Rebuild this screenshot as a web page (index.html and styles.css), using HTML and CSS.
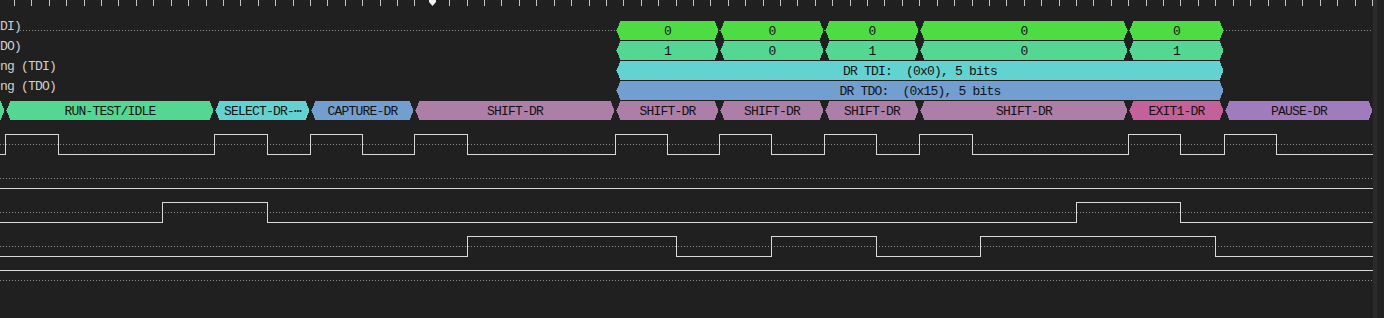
FILE: index.html
```html
<!DOCTYPE html>
<html lang="en">
<head>
    <meta charset="UTF-8">
    <meta name="viewport" content="width=device-width, initial-scale=1.0">
    <link rel="stylesheet" href="styles.css">
    <title>JTAG trace</title>
</head>
<body>
    <div class="view">
        <svg class="traces" width="1373" height="318" viewBox="0 0 1373 318">
            <!-- ruler -->
            <path class="tick" d="M14.5 0V6M31.5 0V6M49.5 0V6M66.5 0V6M84.5 0V6M101.5 0V6M118.5 0V6M136.5 0V6M153.5 0V6M171.5 0V6M188.5 0V6M206.5 0V6M223.5 0V6M240.5 0V6M258.5 0V6M275.5 0V6M293.5 0V6M310.5 0V6M327.5 0V6M345.5 0V6M362.5 0V6M380.5 0V6M397.5 0V6M414.5 0V6M449.5 0V6M467.5 0V6M484.5 0V6M501.5 0V6M519.5 0V6M536.5 0V6M554.5 0V6M571.5 0V6M589.5 0V6M606.5 0V6M623.5 0V6M641.5 0V6M658.5 0V6M676.5 0V6M693.5 0V6M710.5 0V6M728.5 0V6M745.5 0V6M763.5 0V6M780.5 0V6M797.5 0V6M815.5 0V6M832.5 0V6M850.5 0V6M867.5 0V6M884.5 0V6M902.5 0V6M919.5 0V6M937.5 0V6M954.5 0V6M972.5 0V6M989.5 0V6M1006.5 0V6M1024.5 0V6M1041.5 0V6M1059.5 0V6M1076.5 0V6M1093.5 0V6M1111.5 0V6M1128.5 0V6M1146.5 0V6M1163.5 0V6M1180.5 0V6M1198.5 0V6M1215.5 0V6M1233.5 0V6M1250.5 0V6M1268.5 0V6M1285.5 0V6M1302.5 0V6M1320.5 0V6M1337.5 0V6M1355.5 0V6M1372.5 0V6"/>
            <polygon class="marker" points="429,0 436,0 436,2 432.5,6 429,2"/>

            <!-- grid lines -->
            <line class="grid" x1="20" y1="30.5" x2="1373" y2="30.5"/>
            <line class="grid" x1="0" y1="144.5" x2="1373" y2="144.5"/>
            <line class="grid" x1="0" y1="178.5" x2="1373" y2="178.5"/>
            <line class="grid" x1="0" y1="212.5" x2="1373" y2="212.5"/>
            <line class="grid" x1="0" y1="246.5" x2="1373" y2="246.5"/>
            <line class="grid" x1="0" y1="280.5" x2="1373" y2="280.5"/>

            <!-- trace labels -->
            <text class="label" x="0" y="30">DI)</text>
            <text class="label" x="0" y="50">DO)</text>
            <text class="label" x="0" y="70">ng (TDI)</text>
            <text class="label" x="0" y="90">ng (TDO)</text>

            <!-- TDI bits -->
            <g class="ann c-bit0">
                <polygon points="616.5,30.5 620.5,21 714.5,21 718.5,30.5 714.5,40 620.5,40"/>
                <polygon points="720.5,30.5 724.5,21 819.5,21 823.5,30.5 819.5,40 724.5,40"/>
                <polygon points="825.5,30.5 829.5,21 914.5,21 918.5,30.5 914.5,40 829.5,40"/>
                <polygon points="920.5,30.5 924.5,21 1123.5,21 1127.5,30.5 1123.5,40 924.5,40"/>
                <polygon points="1129.5,30.5 1133.5,21 1219.5,21 1223.5,30.5 1219.5,40 1133.5,40"/>
                <text x="667.5" y="35">0</text>
                <text x="772" y="35">0</text>
                <text x="872" y="35">0</text>
                <text x="1024" y="35">0</text>
                <text x="1176.5" y="35">0</text>
            </g>

            <!-- TDO bits -->
            <g class="ann c-bit1">
                <polygon points="616.5,50.5 620.5,41 714.5,41 718.5,50.5 714.5,60 620.5,60"/>
                <polygon points="720.5,50.5 724.5,41 819.5,41 823.5,50.5 819.5,60 724.5,60"/>
                <polygon points="825.5,50.5 829.5,41 914.5,41 918.5,50.5 914.5,60 829.5,60"/>
                <polygon points="920.5,50.5 924.5,41 1123.5,41 1127.5,50.5 1123.5,60 924.5,60"/>
                <polygon points="1129.5,50.5 1133.5,41 1219.5,41 1223.5,50.5 1219.5,60 1133.5,60"/>
                <text x="667.5" y="55">1</text>
                <text x="772" y="55">0</text>
                <text x="872" y="55">1</text>
                <text x="1024" y="55">0</text>
                <text x="1176.5" y="55">1</text>
            </g>

            <!-- data registers -->
            <g class="ann c-cyan">
                <polygon points="616.5,70.5 620.5,61 1219.5,61 1223.5,70.5 1219.5,80 620.5,80"/>
                <text x="920" y="75" xml:space="preserve">DR TDI:  (0x0), 5 bits</text>
            </g>
            <g class="ann c-blue">
                <polygon points="616.5,90.5 620.5,81 1219.5,81 1223.5,90.5 1219.5,100 620.5,100"/>
                <text x="920" y="95" xml:space="preserve">DR TDO:  (0x15), 5 bits</text>
            </g>

            <!-- TAP states -->
            <g class="ann c-bit1">
                <polygon points="-30,110.5 -26,101 0.5,101 4.5,110.5 0.5,120 -26,120"/>
                <polygon points="6.5,110.5 10.5,101 209.5,101 213.5,110.5 209.5,120 10.5,120"/>
                <text x="110" y="115">RUN-TEST/IDLE</text>
            </g>
            <g class="ann c-cyan">
                <polygon points="215.5,110.5 219.5,101 305.5,101 309.5,110.5 305.5,120 219.5,120"/>
                <text x="262.5" y="115">SELECT-DR-⋯</text>
            </g>
            <g class="ann c-blue">
                <polygon points="311.5,110.5 315.5,101 409.5,101 413.5,110.5 409.5,120 315.5,120"/>
                <text x="362.5" y="115">CAPTURE-DR</text>
            </g>
            <g class="ann c-mauve">
                <polygon points="415.5,110.5 419.5,101 610.5,101 614.5,110.5 610.5,120 419.5,120"/>
                <polygon points="616.5,110.5 620.5,101 714.5,101 718.5,110.5 714.5,120 620.5,120"/>
                <polygon points="720.5,110.5 724.5,101 819.5,101 823.5,110.5 819.5,120 724.5,120"/>
                <polygon points="825.5,110.5 829.5,101 914.5,101 918.5,110.5 914.5,120 829.5,120"/>
                <polygon points="920.5,110.5 924.5,101 1123.5,101 1127.5,110.5 1123.5,120 924.5,120"/>
                <text x="515" y="115">SHIFT-DR</text>
                <text x="667.5" y="115">SHIFT-DR</text>
                <text x="772" y="115">SHIFT-DR</text>
                <text x="872" y="115">SHIFT-DR</text>
                <text x="1024" y="115">SHIFT-DR</text>
            </g>
            <g class="ann c-pink">
                <polygon points="1129.5,110.5 1133.5,101 1219.5,101 1223.5,110.5 1219.5,120 1133.5,120"/>
                <text x="1176.5" y="115">EXIT1-DR</text>
            </g>
            <g class="ann c-violet">
                <polygon points="1225.5,110.5 1229.5,101 1368.5,101 1372.5,110.5 1368.5,120 1229.5,120"/>
                <text x="1299" y="115">PAUSE-DR</text>
            </g>

            <!-- logic channels -->
            <polyline class="wave" points="0,154.5 5.5,154.5 5.5,134.5 58.5,134.5 58.5,154.5 214.5,154.5 214.5,134.5 267.5,134.5 267.5,154.5 310.5,154.5 310.5,134.5 362.5,134.5 362.5,154.5 414.5,154.5 414.5,134.5 467.5,134.5 467.5,154.5 615.5,154.5 615.5,134.5 667.5,134.5 667.5,154.5 719.5,154.5 719.5,134.5 771.5,134.5 771.5,154.5 824.5,154.5 824.5,134.5 876.5,134.5 876.5,154.5 919.5,154.5 919.5,134.5 972.5,134.5 972.5,154.5 1128.5,154.5 1128.5,134.5 1180.5,134.5 1180.5,154.5 1224.5,154.5 1224.5,134.5 1276.5,134.5 1276.5,154.5 1373,154.5"/>
            <polyline class="wave" points="0,188.5 1373,188.5"/>
            <polyline class="wave" points="0,222.5 162.5,222.5 162.5,202.5 267.5,202.5 267.5,222.5 1076.5,222.5 1076.5,202.5 1180.5,202.5 1180.5,222.5 1373,222.5"/>
            <polyline class="wave" points="0,256.5 467.5,256.5 467.5,236.5 676.5,236.5 676.5,256.5 771.5,256.5 771.5,236.5 876.5,236.5 876.5,256.5 980.5,256.5 980.5,236.5 1215.5,236.5 1215.5,256.5 1373,256.5"/>
            <polyline class="wave" points="0,270.5 1373,270.5"/>
        </svg>

        <!-- scroll bar -->
        <div class="scrollbar">
            <div class="scroll-track"></div>
        </div>
    </div>
</body>
</html>
```

FILE: styles.css
```css
body {
    margin: 0;
    padding: 0;
    background-color: #202020;
    font-family: "Liberation Mono", "DejaVu Sans Mono", monospace;
}

.view {
    display: flex;
    height: 318px;
    overflow: hidden;
}

.traces {
    flex: none;
    display: block;
}

/* ruler */
.tick {
    stroke: #c4c4c4;
    stroke-width: 1;
}

.marker {
    fill: #f2f2f2;
}

/* traces */
.grid {
    stroke: #8c8c8c;
    stroke-width: 1;
    stroke-dasharray: 1 2;
    shape-rendering: crispEdges;
}

.wave {
    fill: none;
    stroke: #d8d8d8;
    stroke-width: 1;
    shape-rendering: crispEdges;
}

.label {
    fill: #d0d0d0;
    font-size: 13px;
    letter-spacing: -0.8px;
}

/* decoder annotations */
.ann polygon {
    shape-rendering: crispEdges;
}

.ann text {
    fill: #111111;
    font-size: 13px;
    letter-spacing: -0.8px;
    text-anchor: middle;
}

.c-bit0 polygon { fill: #4edc44; }
.c-bit1 polygon { fill: #55d794; }
.c-cyan polygon { fill: #63d3d2; }
.c-blue polygon { fill: #729fcf; }
.c-mauve polygon { fill: #ad7fa8; }
.c-pink polygon { fill: #c4619b; }
.c-violet polygon { fill: #a07cbf; }

/* scroll bar */
.scrollbar {
    flex: 1;
    background-color: #222222;
}

.scroll-track {
    width: 4px;
    height: 100%;
    background-color: #2b2b2b;
}
```
